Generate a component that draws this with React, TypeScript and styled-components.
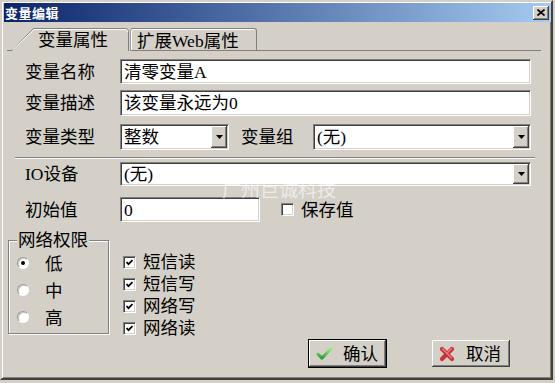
import React from "react";
import styled, { createGlobalStyle } from "styled-components";

const FONT = `"Liberation Serif", "Noto Sans CJK SC", serif`;
const FACE = "#d4d0c8";

const GlobalStyle = createGlobalStyle`
    html, body {
        margin: 0;
        padding: 0;
        background: ${FACE};
    }
    body {
        font-family: ${FONT};
    }
`;

const Window = styled.div`
    position: relative;
    box-sizing: border-box;
    width: 553px;
    height: 380px;
    padding: 1px 0 1px 2px;
    background: ${FACE};
    border: 2px solid;
    border-color: ${FACE} #404040 #404040 ${FACE};
    box-shadow: inset 1px 1px 0 #fff, inset -1px -1px 0 #808080;
    font-family: ${FONT};
    font-size: 17.5px;
    color: #000;
    overflow: hidden;
`;

const TitleBar = styled.div`
    display: flex;
    align-items: center;
    justify-content: space-between;
    height: 19px;
    padding: 0 2px 0 1px;
    background: linear-gradient(to right, #0a246a, #a6caf0);
`;

const Title = styled.span`
    color: #fff;
    font-family: "Noto Sans CJK SC", sans-serif;
    font-weight: bold;
    font-size: 13px;
    letter-spacing: 0.5px;
    line-height: 19px;
`;

const CloseButton = styled.div`
    box-sizing: border-box;
    width: 16px;
    height: 14px;
    display: flex;
    align-items: center;
    justify-content: center;
    background: ${FACE};
    box-shadow: inset -1px -1px 0 #404040, inset 1px 1px 0 #fff,
        inset -2px -2px 0 #808080;
`;

const TabStrip = styled.div`
    display: flex;
    align-items: flex-end;
    width: 534px;
    height: 23px;
    margin: 6px 0 0 3px;
`;

const ActiveTab = styled.div`
    position: relative;
    box-sizing: border-box;
    width: 122px;
    height: 23px;
    padding: 3px 0 0 31px;
    line-height: 18px;
    white-space: nowrap;

    svg {
        position: absolute;
        left: 0;
        top: 0;
    }

    span {
        position: relative;
    }
`;

const Tab = styled.div`
    box-sizing: border-box;
    width: 127px;
    height: 23px;
    margin-left: 1px;
    padding: 3px 0 0 6px;
    line-height: 18px;
    white-space: nowrap;
    border: 1px solid #808080;
    border-left-color: #a0a0a0;
    border-radius: 3px 3px 0 0;
    box-shadow: inset 1px 1px 0 #fff;
`;

const TabFiller = styled.div`
    flex: 1;
    border-bottom: 1px solid #808080;
`;

const Row = styled.div<{ $top: number; $h: number }>`
    display: flex;
    align-items: center;
    height: ${p => p.$h}px;
    margin-top: ${p => p.$top}px;
    padding-left: 21px;
`;

const Label = styled.span<{ $w?: number; $gap?: number }>`
    flex: none;
    width: ${p => p.$w ?? 95}px;
    margin-left: ${p => p.$gap ?? 0}px;
    line-height: 20px;
    white-space: nowrap;
`;

const Sunken = styled.div<{ $w: number }>`
    box-sizing: border-box;
    width: ${p => p.$w}px;
    height: 100%;
    display: flex;
    align-items: center;
    justify-content: space-between;
    padding: 1px 1px 1px 3px;
    background: #fff;
    border: 1px solid;
    border-color: #808080 #fff #fff #808080;
    box-shadow: inset 1px 1px 0 #404040, inset -1px -1px 0 ${FACE};
    line-height: 20px;
    white-space: nowrap;
`;

const DropButton = styled.div`
    box-sizing: border-box;
    width: 16px;
    height: 100%;
    flex: none;
    display: flex;
    align-items: center;
    justify-content: center;
    background: ${FACE};
    box-shadow: inset -1px -1px 0 #404040, inset 1px 1px 0 #fff,
        inset -2px -2px 0 #808080;
`;

const Separator = styled.div`
    margin: 7px 16px 0 11px;
    border-top: 1px solid #808080;
    border-bottom: 1px solid #fff;
`;

const Watermark = styled.div`
    position: absolute;
    left: 220px;
    top: 177px;
    font-family: "Noto Sans CJK SC", sans-serif;
    font-size: 19px;
    line-height: 1;
    color: rgba(255, 255, 255, 0.6);
    pointer-events: none;
    white-space: nowrap;
`;

const Lower = styled.div`
    display: flex;
    align-items: flex-start;
    height: 107px;
    margin-top: 10px;
    padding-left: 4px;
`;

const GroupBox = styled.div`
    position: relative;
    box-sizing: border-box;
    width: 101px;
    height: 94px;
    margin-top: 8px;
    padding: 8px 0 0 8px;
    border: 1px solid #808080;
    box-shadow: inset 1px 1px 0 #fff, 1px 1px 0 #fff;
`;

const GroupTitle = styled.span`
    position: absolute;
    left: 8px;
    top: -9px;
    padding: 0 1px;
    background: ${FACE};
    line-height: 16px;
`;

const RadioRow = styled.div`
    display: flex;
    align-items: center;
    height: 27px;
`;

const RadioDot = styled.span<{ $on: boolean }>`
    box-sizing: border-box;
    width: 12px;
    height: 12px;
    margin-right: 16px;
    flex: none;
    display: flex;
    align-items: center;
    justify-content: center;
    border-radius: 50%;
    background: #fff;
    border: 1px solid;
    border-color: #9a9a9a #fff #fff #9a9a9a;
    box-shadow: inset 1px 1px 0 #c8c8c8;

    &::after {
        content: "";
        width: 4px;
        height: 4px;
        border-radius: 50%;
        background: ${p => (p.$on ? "#000" : "transparent")};
    }
`;

const CheckList = styled.div`
    margin-left: 14px;
    padding-top: 19px;
`;

const CheckRow = styled.div<{ $h?: number; $gap?: number }>`
    display: flex;
    align-items: center;
    height: ${p => p.$h ?? 22}px;
    margin-left: ${p => p.$gap ?? 0}px;
    line-height: 20px;
    white-space: nowrap;
`;

const CheckBox = styled.span`
    box-sizing: border-box;
    width: 13px;
    height: 13px;
    margin-right: 7px;
    flex: none;
    display: flex;
    align-items: center;
    justify-content: center;
    background: #fff;
    border: 1px solid;
    border-color: #808080 #fff #fff #808080;
    box-shadow: inset 1px 1px 0 #404040, inset -1px -1px 0 ${FACE};
`;

const ButtonRow = styled.div`
    display: flex;
    padding-left: 304px;
`;

const Button = styled.div<{ $default?: boolean; $w: number }>`
    box-sizing: border-box;
    width: ${p => p.$w}px;
    height: 29px;
    display: flex;
    align-items: center;
    padding-left: 7px;
    gap: 11px;
    background: ${FACE};
    border: 1px solid ${p => (p.$default ? "#000" : FACE)};
    box-shadow: inset -1px -1px 0 #404040, inset 1px 1px 0 #fff,
        inset -2px -2px 0 #808080;
    line-height: 20px;
    & + & {
        margin-left: 44px;
    }
`;

const ArrowDown = () => (
    <svg width="7" height="4" viewBox="0 0 7 4">
        <path d="M0 0H7L3.5 4Z" fill="#000" />
    </svg>
);

const Tick = () => (
    <svg width="7" height="7" viewBox="0 0 7 7">
        <polyline points="0.5,3 2.5,5.2 6.5,1" fill="none" stroke="#000" strokeWidth="1.8" />
    </svg>
);

const Combo: React.FC<{ w: number; value: string }> = ({ w, value }) => (
    <Sunken $w={w}>
        <span>{value}</span>
        <DropButton>
            <ArrowDown />
        </DropButton>
    </Sunken>
);

const Radio: React.FC<{ on?: boolean; text: string }> = ({ on = false, text }) => (
    <RadioRow>
        <RadioDot $on={on} />
        {text}
    </RadioRow>
);

const Check: React.FC<{ on?: boolean; text: string; h?: number; gap?: number }> = ({
    on = false,
    text,
    h,
    gap
}) => (
    <CheckRow $h={h} $gap={gap}>
        <CheckBox>{on ? <Tick /> : null}</CheckBox>
        {text}
    </CheckRow>
);

const OkIcon = () => (
    <svg width="16" height="13" viewBox="0 0 16 13">
        <defs>
            <linearGradient id="okg" x1="0" y1="0" x2="0" y2="1">
                <stop offset="0" stopColor="#9ce87f" />
                <stop offset="1" stopColor="#2f9d3c" />
            </linearGradient>
        </defs>
        <path
            d="M2 7.2L6 11L14.5 2"
            fill="none"
            stroke="url(#okg)"
            strokeWidth="3.2"
            strokeLinecap="round"
            strokeLinejoin="round"
        />
    </svg>
);

const CancelIcon = () => (
    <svg width="16" height="16" viewBox="0 0 16 16">
        <g stroke="#c9333b" strokeWidth="4.2" strokeLinecap="round">
            <path d="M3 3L13 13" />
            <path d="M13 3L3 13" />
        </g>
        <g stroke="#ee8a8e" strokeWidth="1.2" strokeLinecap="round">
            <path d="M3.5 2.8L12.5 11.8" />
            <path d="M12.5 2.6L8.8 6.3" />
        </g>
    </svg>
);

export default function App() {
    return (
        <>
            <GlobalStyle />
            <Window>
                <TitleBar>
                    <Title>变量编辑</Title>
                    <CloseButton>
                        <svg width="8" height="7" viewBox="0 0 8 7">
                            <path d="M0.5 0.5L7.5 6.5M7.5 0.5L0.5 6.5" stroke="#000" strokeWidth="1.7" />
                        </svg>
                    </CloseButton>
                </TitleBar>

                <TabStrip>
                    <ActiveTab>
                        <svg width="122" height="23" viewBox="0 0 122 23">
                            <path
                                d="M0 22.5H5L26.5 0.5H118.5Q121.5 0.5 121.5 3.5V23"
                                fill="none"
                                stroke="#808080"
                            />
                            <path
                                d="M6 21.5L27 1.5H118Q120.5 1.5 120.5 4"
                                fill="none"
                                stroke="#fff"
                            />
                        </svg>
                        <span>变量属性</span>
                    </ActiveTab>
                    <Tab>扩展Web属性</Tab>
                    <TabFiller />
                </TabStrip>

                <Row $top={8} $h={25}>
                    <Label>变量名称</Label>
                    <Sunken $w={411}>清零变量A</Sunken>
                </Row>
                <Row $top={6} $h={26}>
                    <Label>变量描述</Label>
                    <Sunken $w={411}>该变量永远为0</Sunken>
                </Row>
                <Row $top={8} $h={26}>
                    <Label>变量类型</Label>
                    <Combo w={109} value="整数" />
                    <Label $w={72} $gap={12}>
                        变量组
                    </Label>
                    <Combo w={218} value="(无)" />
                </Row>

                <Separator />

                <Row $top={3} $h={24}>
                    <Label>IO设备</Label>
                    <Combo w={411} value="(无)" />
                </Row>
                <Row $top={11} $h={25}>
                    <Label>初始值</Label>
                    <Sunken $w={140}>0</Sunken>
                    <Check text="保存值" h={25} gap={21} />
                </Row>

                <Lower>
                    <GroupBox>
                        <GroupTitle>网络权限</GroupTitle>
                        <Radio on text="低" />
                        <Radio text="中" />
                        <Radio text="高" />
                    </GroupBox>
                    <CheckList>
                        <Check on text="短信读" />
                        <Check on text="短信写" />
                        <Check on text="网络写" />
                        <Check on text="网络读" />
                    </CheckList>
                </Lower>

                <ButtonRow>
                    <Button $default $w={79}>
                        <OkIcon />
                        确认
                    </Button>
                    <Button $w={80}>
                        <CancelIcon />
                        取消
                    </Button>
                </ButtonRow>

                <Watermark>广州巨诚科技</Watermark>
            </Window>
        </>
    );
}
